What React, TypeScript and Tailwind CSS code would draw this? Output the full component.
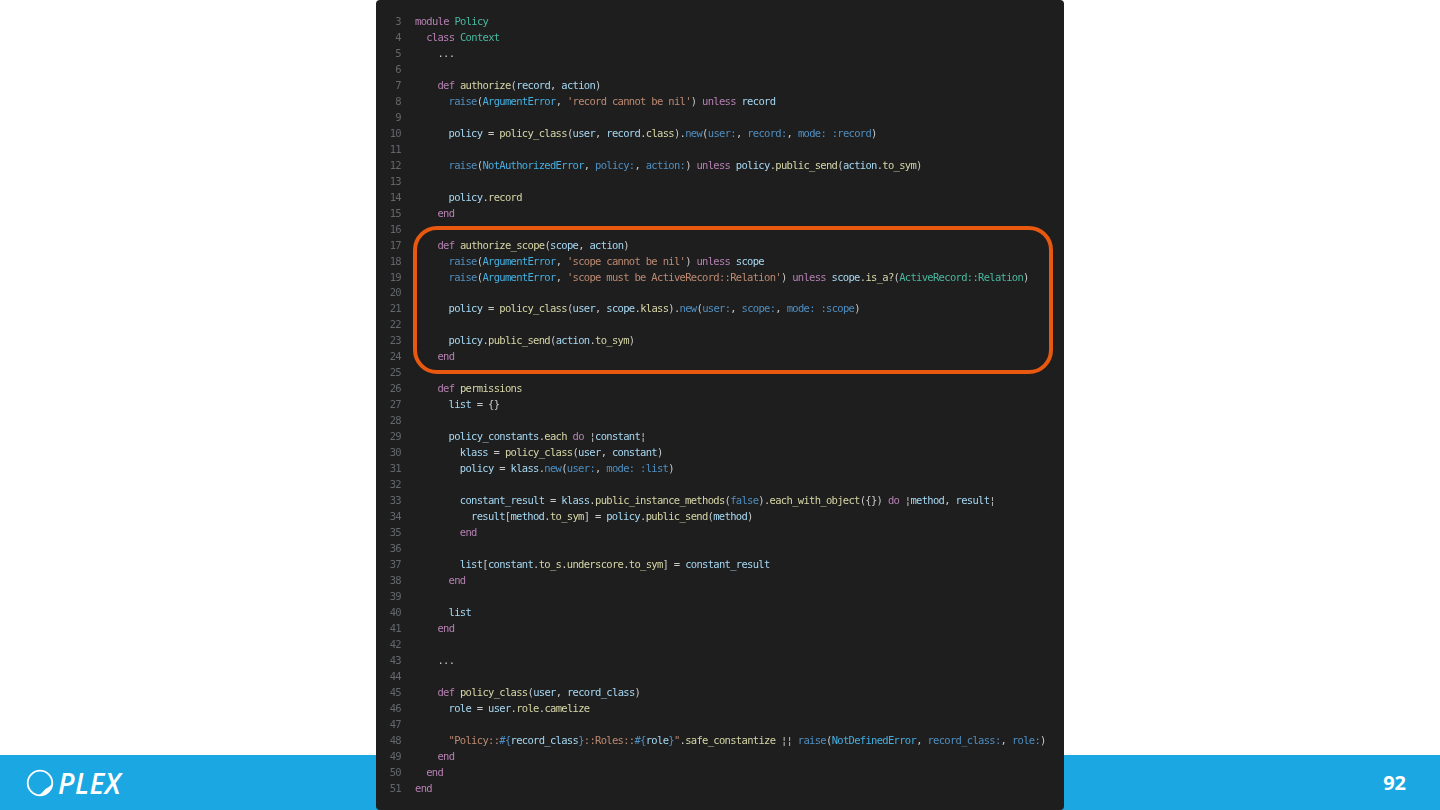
const tone = {
  k: 'text-[#b681b3]',
  c: 'text-[#4ab89f]',
  f: 'text-[#d6d6a8]',
  v: 'text-[#a6d8f2]',
  s: 'text-[#bd8a72]',
  b: 'text-[#4f8fc2]',
  e: 'text-[#45aee0]',
  p: 'text-[#c8c8c8]',
};

type Tone = keyof typeof tone;
type Token = [Tone, string];

// first number is the indent in characters
const code: [number, Token[]][] = [
  [0, [['k', 'module '], ['c', 'Policy']]],
  [2, [['k', 'class '], ['c', 'Context']]],
  [4, [['p', '...']]],
  [0, []],
  [4, [['k', 'def '], ['f', 'authorize'], ['p', '('], ['v', 'record'], ['p', ', '], ['v', 'action'], ['p', ')']]],
  [6, [['b', 'raise'], ['p', '('], ['e', 'ArgumentError'], ['p', ', '], ['s', "'record cannot be nil'"], ['p', ') '], ['k', 'unless '], ['v', 'record']]],
  [0, []],
  [6, [['v', 'policy'], ['p', ' = '], ['f', 'policy_class'], ['p', '('], ['v', 'user'], ['p', ', '], ['v', 'record'], ['p', '.'], ['f', 'class'], ['p', ').'], ['b', 'new'], ['p', '('], ['b', 'user:'], ['p', ', '], ['b', 'record:'], ['p', ', '], ['b', 'mode: :record'], ['p', ')']]],
  [0, []],
  [6, [['b', 'raise'], ['p', '('], ['e', 'NotAuthorizedError'], ['p', ', '], ['b', 'policy:'], ['p', ', '], ['b', 'action:'], ['p', ') '], ['k', 'unless '], ['v', 'policy'], ['p', '.'], ['f', 'public_send'], ['p', '('], ['v', 'action'], ['p', '.'], ['f', 'to_sym'], ['p', ')']]],
  [0, []],
  [6, [['v', 'policy'], ['p', '.'], ['f', 'record']]],
  [4, [['k', 'end']]],
  [0, []],
  [4, [['k', 'def '], ['f', 'authorize_scope'], ['p', '('], ['v', 'scope'], ['p', ', '], ['v', 'action'], ['p', ')']]],
  [6, [['b', 'raise'], ['p', '('], ['e', 'ArgumentError'], ['p', ', '], ['s', "'scope cannot be nil'"], ['p', ') '], ['k', 'unless '], ['v', 'scope']]],
  [6, [['b', 'raise'], ['p', '('], ['e', 'ArgumentError'], ['p', ', '], ['s', "'scope must be ActiveRecord::Relation'"], ['p', ') '], ['k', 'unless '], ['v', 'scope'], ['p', '.'], ['f', 'is_a?'], ['p', '('], ['c', 'ActiveRecord::Relation'], ['p', ')']]],
  [0, []],
  [6, [['v', 'policy'], ['p', ' = '], ['f', 'policy_class'], ['p', '('], ['v', 'user'], ['p', ', '], ['v', 'scope'], ['p', '.'], ['f', 'klass'], ['p', ').'], ['b', 'new'], ['p', '('], ['b', 'user:'], ['p', ', '], ['b', 'scope:'], ['p', ', '], ['b', 'mode: :scope'], ['p', ')']]],
  [0, []],
  [6, [['v', 'policy'], ['p', '.'], ['f', 'public_send'], ['p', '('], ['v', 'action'], ['p', '.'], ['f', 'to_sym'], ['p', ')']]],
  [4, [['k', 'end']]],
  [0, []],
  [4, [['k', 'def '], ['f', 'permissions']]],
  [6, [['v', 'list'], ['p', ' = {}']]],
  [0, []],
  [6, [['v', 'policy_constants'], ['p', '.'], ['f', 'each'], ['k', ' do '], ['p', '¦'], ['v', 'constant'], ['p', '¦']]],
  [8, [['v', 'klass'], ['p', ' = '], ['f', 'policy_class'], ['p', '('], ['v', 'user'], ['p', ', '], ['v', 'constant'], ['p', ')']]],
  [8, [['v', 'policy'], ['p', ' = '], ['v', 'klass'], ['p', '.'], ['b', 'new'], ['p', '('], ['b', 'user:'], ['p', ', '], ['b', 'mode: :list'], ['p', ')']]],
  [0, []],
  [8, [['v', 'constant_result'], ['p', ' = '], ['v', 'klass'], ['p', '.'], ['f', 'public_instance_methods'], ['p', '('], ['b', 'false'], ['p', ').'], ['f', 'each_with_object'], ['p', '({}) '], ['k', 'do '], ['p', '¦'], ['v', 'method'], ['p', ', '], ['v', 'result'], ['p', '¦']]],
  [10, [['v', 'result'], ['p', '['], ['v', 'method'], ['p', '.'], ['f', 'to_sym'], ['p', '] = '], ['v', 'policy'], ['p', '.'], ['f', 'public_send'], ['p', '('], ['v', 'method'], ['p', ')']]],
  [8, [['k', 'end']]],
  [0, []],
  [8, [['v', 'list'], ['p', '['], ['v', 'constant'], ['p', '.'], ['f', 'to_s'], ['p', '.'], ['f', 'underscore'], ['p', '.'], ['f', 'to_sym'], ['p', '] = '], ['v', 'constant_result']]],
  [6, [['k', 'end']]],
  [0, []],
  [6, [['v', 'list']]],
  [4, [['k', 'end']]],
  [0, []],
  [4, [['p', '...']]],
  [0, []],
  [4, [['k', 'def '], ['f', 'policy_class'], ['p', '('], ['v', 'user'], ['p', ', '], ['v', 'record_class'], ['p', ')']]],
  [6, [['v', 'role'], ['p', ' = '], ['v', 'user'], ['p', '.'], ['f', 'role'], ['p', '.'], ['f', 'camelize']]],
  [0, []],
  [6, [['s', '"Policy::'], ['b', '#{'], ['v', 'record_class'], ['b', '}'], ['s', '::Roles::'], ['b', '#{'], ['v', 'role'], ['b', '}'], ['s', '"'], ['p', '.'], ['f', 'safe_constantize'], ['p', ' ¦¦ '], ['b', 'raise'], ['p', '('], ['e', 'NotDefinedError'], ['p', ', '], ['b', 'record_class:'], ['p', ', '], ['b', 'role:'], ['p', ')']]],
  [4, [['k', 'end']]],
  [2, [['k', 'end']]],
  [0, [['k', 'end']]],
];

function PlexLogo() {
  return (
    <div className="flex items-center gap-[4px]">
      <svg width="28" height="28" viewBox="0 0 28 28" fill="none">
        <circle cx="14" cy="14" r="12.3" stroke="white" strokeWidth="1.8" />
        <path d="M26 14C25 17.5 21.5 18.4 19 20.4C17 22 15.5 25 12.5 26C18.5 27.5 26.5 22.5 26 14Z" fill="white" />
      </svg>
      <span className="font-['Open_Sans',sans-serif] text-[28px] font-semibold italic leading-none tracking-[0.5px] text-white">
        PLEX
      </span>
    </div>
  );
}

export default function App() {
  return (
    <div className="relative h-[810px] w-[1440px] overflow-hidden bg-white">
      <footer className="absolute inset-x-0 bottom-0 flex h-[55px] items-center justify-between bg-[#1ba7e1] pl-[26px] pr-[34px]">
        <PlexLogo />
        <span className="mt-[1px] font-['Open_Sans',sans-serif] text-[20px] font-bold text-white">92</span>
      </footer>

      <div className="relative mx-auto h-[810px] w-[688px] rounded-[4px] bg-[#1e1e1e] pt-[14px]">
        <div className="font-['DejaVu_Sans_Mono',monospace] text-[10.5px] font-medium leading-[15.98px] tracking-[-0.69px] blur-[0.35px]">
          {code.map(([indent, tokens], idx) => (
            <div key={idx} className="flex h-[15.98px] whitespace-pre">
              <span className="mr-[14px] w-[25px] text-right text-[#63666a]">{idx + 3}</span>
              <span style={{ paddingLeft: indent * 5.6 }}>
                {tokens.map(([t, text], i) => (
                  <span key={i} className={tone[t]}>{text}</span>
                ))}
              </span>
            </div>
          ))}
        </div>
        <div className="absolute left-[37px] top-[226px] h-[148px] w-[640px] rounded-[24px] border-[4px] border-[#e8590f]" />
      </div>
    </div>
  );
}
